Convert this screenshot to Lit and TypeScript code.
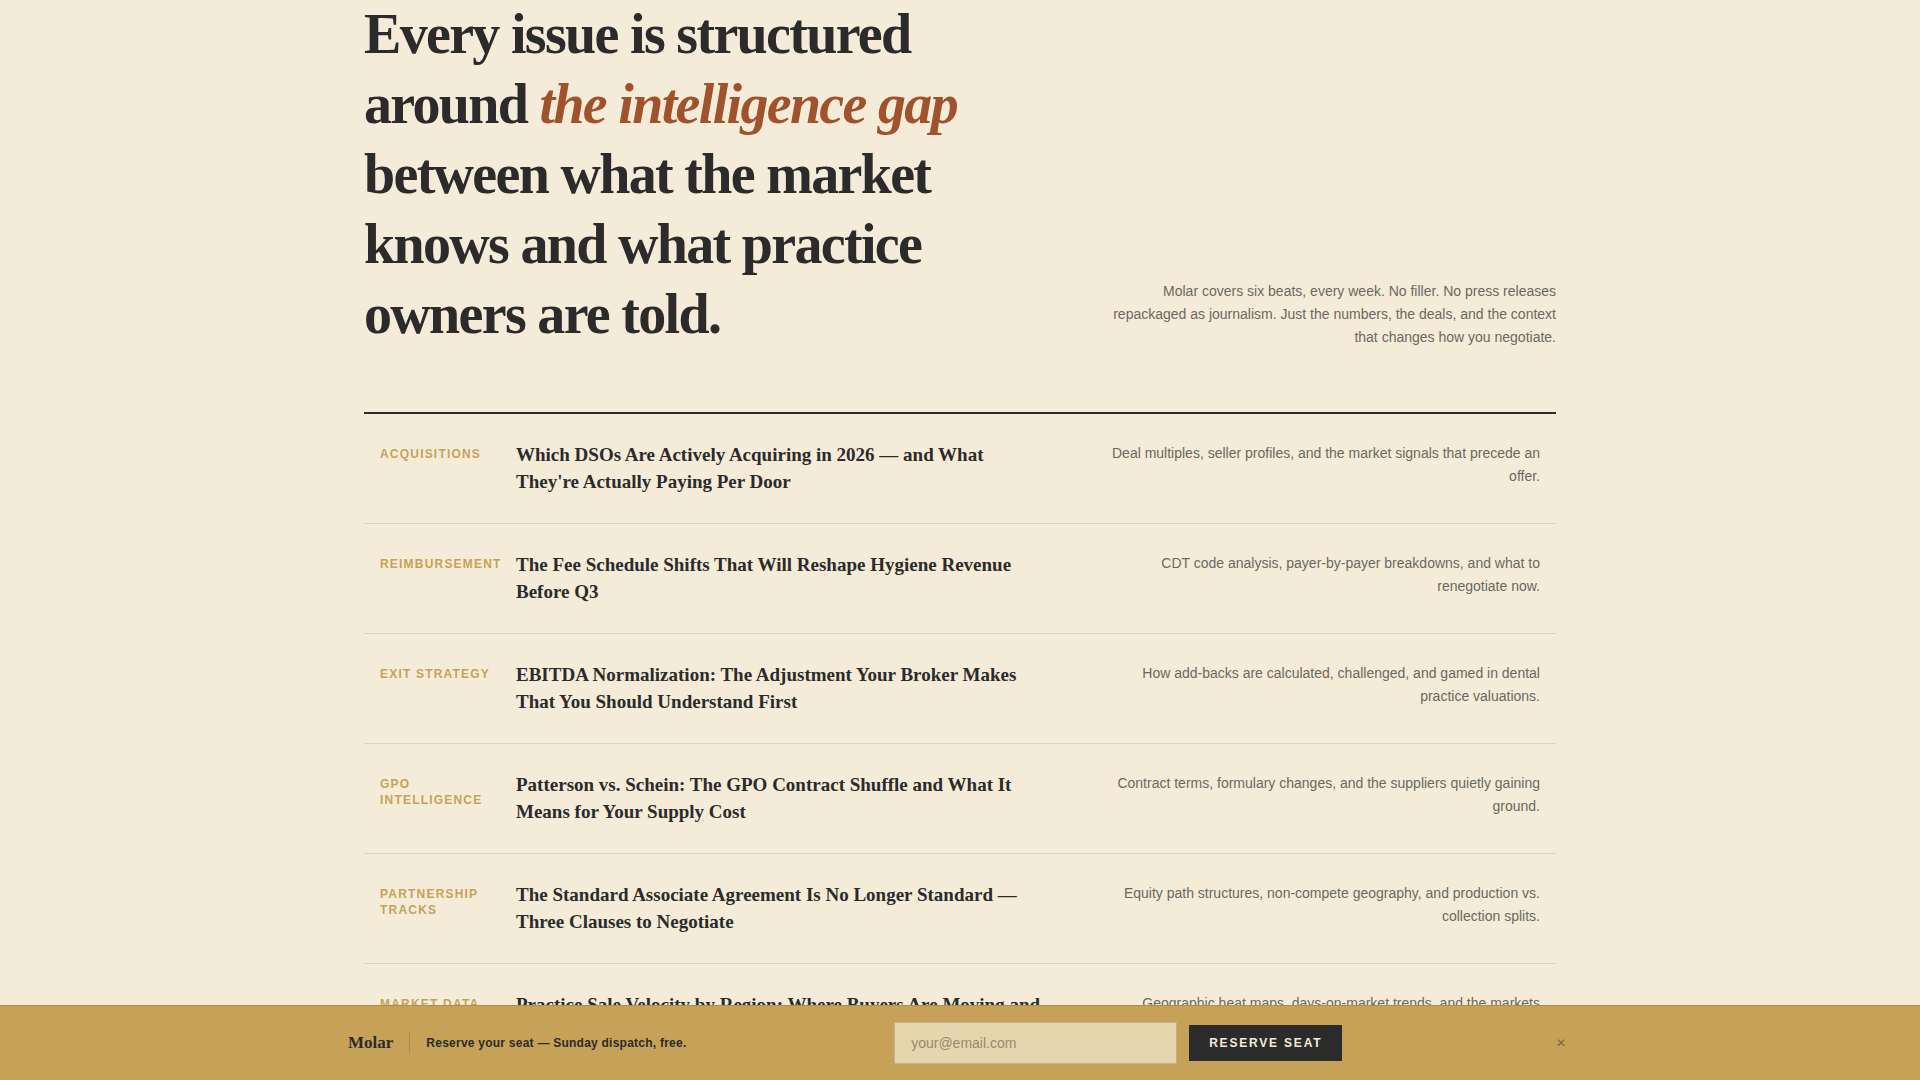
import { LitElement, html, css } from "lit";
import { customElement, property } from "lit/decorators.js";

interface Beat {
  tag: string;
  title: string;
  note: string;
}

const BEATS: Beat[] = [
  {
    tag: "Acquisitions",
    title: "Which DSOs Are Actively Acquiring in 2026 — and What They're Actually Paying Per Door",
    note: "Deal multiples, seller profiles, and the market signals that precede an offer.",
  },
  {
    tag: "Reimbursement",
    title: "The Fee Schedule Shifts That Will Reshape Hygiene Revenue Before Q3",
    note: "CDT code analysis, payer-by-payer breakdowns, and what to renegotiate now.",
  },
  {
    tag: "Exit Strategy",
    title: "EBITDA Normalization: The Adjustment Your Broker Makes That You Should Understand First",
    note: "How add-backs are calculated, challenged, and gamed in dental practice valuations.",
  },
  {
    tag: "GPO Intelligence",
    title: "Patterson vs. Schein: The GPO Contract Shuffle and What It Means for Your Supply Cost",
    note: "Contract terms, formulary changes, and the suppliers quietly gaining ground.",
  },
  {
    tag: "Partnership Tracks",
    title: "The Standard Associate Agreement Is No Longer Standard — Three Clauses to Negotiate",
    note: "Equity path structures, non-compete geography, and production vs. collection splits.",
  },
  {
    tag: "Market Data",
    title: "Practice Sale Velocity by Region: Where Buyers Are Moving and",
    note: "Geographic heat maps, days-on-market trends, and the markets",
  },
];

@customElement("beat-row")
class BeatRow extends LitElement {
  @property({ attribute: false }) beat!: Beat;

  static styles = css`
    :host {
      display: block;
    }
    .row {
      display: grid;
      grid-template-columns: 112px 6fr 5fr;
      column-gap: 24px;
      padding: 27px 16px 28px;
      border-bottom: 1px solid #dbd2bf;
    }
    .tag {
      margin: 0;
      padding-top: 5px;
      font: bold 12px/16px "Liberation Sans", Arial, sans-serif;
      letter-spacing: 0.1em;
      text-transform: uppercase;
      color: #c5a258;
    }
    .title {
      margin: 0;
      padding-right: 16px;
      font: bold 19px/27px "Liberation Serif", "Times New Roman", serif;
      color: #2b2b2b;
    }
    .note {
      justify-self: end;
      max-width: 440px;
      margin: 0;
      padding-top: 1px;
      font: 14px/23px "Liberation Sans", Arial, sans-serif;
      text-align: right;
      color: #6b6860;
    }
  `;

  render() {
    return html`<article class="row">
      <p class="tag">${this.beat.tag}</p>
      <h3 class="title">${this.beat.title}</h3>
      <p class="note">${this.beat.note}</p>
    </article>`;
  }
}

@customElement("reserve-bar")
class ReserveBar extends LitElement {
  static styles = css`
    :host {
      position: fixed;
      left: 0;
      right: 0;
      bottom: 0;
      background: #c5a258;
      border-top: 1px solid #b08e48;
      font-family: "Liberation Sans", Arial, sans-serif;
      color: #2b2b2b;
    }
    .inner {
      display: flex;
      align-items: center;
      justify-content: space-between;
      max-width: 1224px;
      margin: 0 auto;
      padding: 16px 24px;
    }
    .pitch {
      display: flex;
      align-items: center;
      gap: 16px;
    }
    .brand {
      font: bold 17px/20px "Liberation Serif", "Times New Roman", serif;
      padding-right: 16px;
      border-right: 1px solid #ab8b47;
    }
    .line {
      margin: 0;
      font-size: 12px;
      font-weight: bold;
      letter-spacing: 0.02em;
    }
    .form {
      display: flex;
      align-items: center;
      gap: 12px;
    }
    .email {
      box-sizing: border-box;
      width: 283px;
      height: 42px;
      padding: 0 16px;
      border: 1px solid #c7b285;
      border-radius: 0;
      background: #e6d6af;
      font: 14px "Liberation Sans", Arial, sans-serif;
      color: #2b2b2b;
      outline: none;
    }
    .email::placeholder {
      color: #958a6d;
      opacity: 1;
    }
    .submit {
      height: 36px;
      padding: 0 20px;
      border: 0;
      background: #2b2b2b;
      color: #f5ecd7;
      font: bold 12px "Liberation Sans", Arial, sans-serif;
      letter-spacing: 0.15em;
      text-transform: uppercase;
      cursor: pointer;
    }
    .close {
      width: 22px;
      height: 24px;
      padding: 0;
      border: 0;
      background: none;
      font: 12px/24px "DejaVu Sans", sans-serif;
      color: #2b2b2b;
      opacity: 0.5;
      cursor: pointer;
    }
  `;

  render() {
    return html`<div class="inner">
      <div class="pitch">
        <span class="brand">Molar</span>
        <p class="line">Reserve your seat — Sunday dispatch, free.</p>
      </div>
      <form class="form" @submit=${(e: Event) => e.preventDefault()}>
        <input class="email" type="email" placeholder="your@email.com" aria-label="your@email.com" />
        <button class="submit" type="submit">Reserve seat</button>
      </form>
      <button class="close" type="button">✕</button>
    </div>`;
  }
}

@customElement("app-root")
class AppRoot extends LitElement {
  static styles = css`
    :host {
      display: flow-root;
      min-height: 100vh;
      background: #f4ecd8;
    }
    .page {
      max-width: 1192px;
      margin: -1px auto 0;
      padding: 0 24px;
    }
    .head {
      display: flex;
      align-items: flex-end;
      justify-content: space-between;
      gap: 64px;
      padding-bottom: 63px;
      border-bottom: 2px solid #332727;
    }
    .headline {
      margin: 0;
      max-width: 624px;
      font: bold 56px/70px "Liberation Serif", "Times New Roman", serif;
      letter-spacing: -0.03em;
      color: #2b2b2b;
    }
    .accent {
      color: #a0522d;
    }
    .intro {
      margin: 0;
      max-width: 448px;
      font: 14px/23px "Liberation Sans", Arial, sans-serif;
      text-align: right;
      color: #6b6860;
    }
  `;

  render() {
    return html`
      <main class="page">
        <header class="head">
          <h2 class="headline">
            Every issue is structured around <em class="accent">the intelligence gap</em> between what the market
            knows and what practice owners are told.
          </h2>
          <p class="intro">
            Molar covers six beats, every week. No filler. No press releases repackaged as journalism. Just the
            numbers, the deals, and the context that changes how you negotiate.
          </p>
        </header>
        ${BEATS.map((beat) => html`<beat-row .beat=${beat}></beat-row>`)}
      </main>
      <reserve-bar></reserve-bar>
    `;
  }
}
